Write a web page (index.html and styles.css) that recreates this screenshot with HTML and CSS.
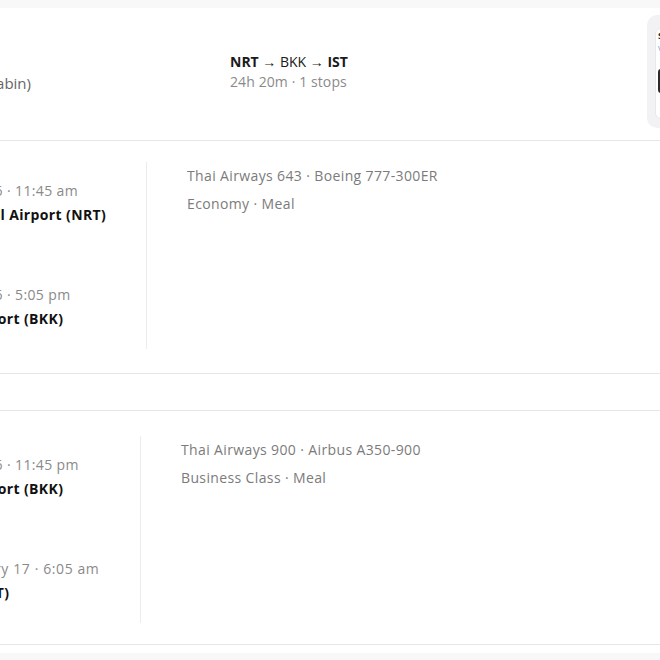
FILE: index.html
```html
<!DOCTYPE html>
<html lang="en">
<head>
<meta charset="utf-8">
<title>Itinerary</title>
<link rel="stylesheet" href="styles.css">
</head>
<body>
<div class="card">
  <div class="header">
    <div class="h-left">
      <div class="h-title">Tokyo to Istanbul</div>
      <div class="h-sub">2 adults · One way (Mixed cabin)</div>
    </div>
    <div class="h-mid">
      <div class="route"><b>NRT</b> → BKK → <b>IST</b></div>
      <div class="meta">24h 20m · 1 stops</div>
    </div>
    <div class="h-right">
      <div class="offer">
        <div class="offer-title">Select fare</div>
        <div class="offer-link">View details</div>
        <div class="offer-btn">Book</div>
      </div>
    </div>
  </div>

  <div class="leg leg-first">
    <div class="times">
      <div class="stop">
        <div class="when">Tuesday, February 16 · 11:45 am</div>
        <div class="where">Narita International Airport (NRT)</div>
      </div>
      <div class="stop">
        <div class="when">Tuesday, February 16 · 5:05 pm</div>
        <div class="where">Suvarnabhumi Airport (BKK)</div>
      </div>
    </div>
    <div class="details">
      <div class="line">Thai Airways 643 · Boeing 777-300ER</div>
      <div class="line">Economy · Meal</div>
    </div>
  </div>

  <div class="layover">6h 40m layover · Bangkok</div>

  <div class="leg leg-second">
    <div class="times">
      <div class="stop">
        <div class="when">Tuesday, February 16 · 11:45 pm</div>
        <div class="where">Suvarnabhumi Airport (BKK)</div>
      </div>
      <div class="stop">
        <div class="when when-long">Wednesday, February 17 · 6:05 am</div>
        <div class="where">Istanbul Airport (IST)</div>
      </div>
    </div>
    <div class="details">
      <div class="line">Thai Airways 900 · Airbus A350-900</div>
      <div class="line">Business Class · Meal</div>
    </div>
  </div>
</div>
</body>
</html>
```

FILE: styles.css
```css
html, body {
  margin: 0;
  padding: 0;
}
body {
  background: #f8f8f8;
  font-family: "Open Sans", "Liberation Sans", sans-serif;
  font-size: 14px;
  color: #1a1a1a;
  overflow: hidden;
  padding-top: 8px;
}
.card {
  background: #ffffff;
  width: 1200px;
  margin-left: -200px;
  padding-bottom: 8px;
}
.header {
  display: grid;
  grid-template-columns: 430px 417px 1fr;
  align-items: center;
  height: 132px;
  border-bottom: 1px solid #e6e6e6;
}
.h-left {
  padding-right: 199px;
  margin-top: -4px;
}
.h-title {
  font-weight: 600;
  font-size: 15px;
  line-height: 22px;
  text-align: left;
  padding-left: 20px;
}
.h-sub {
  font-size: 15px;
  line-height: 22px;
  color: #666;
  text-align: right;
}
.h-mid {
  margin-top: -5px;
  line-height: 20px;
}
.route {
  color: #1a1a1a;
}
.route b {
  font-weight: 700;
}
.meta {
  color: #8a8a8a;
  letter-spacing: 0.1px;
}
.h-right {
  align-self: start;
  margin-top: 7px;
  height: 113px;
  box-sizing: border-box;
  background: #f2f2f4;
  border-radius: 10px;
  padding: 13px 8px 9px;
}
.offer {
  height: 100%;
  box-sizing: border-box;
  background: #ffffff;
  border: 1px solid #e8e8ea;
  border-radius: 6px;
  padding: 1px 2px;
}
.offer-title {
  font-size: 9px;
  font-weight: 700;
  line-height: 12px;
  color: #222;
}
.offer-link {
  font-size: 7px;
  line-height: 10px;
  color: #4a8fd8;
  margin-top: 2px;
}
.offer-btn {
  margin-top: 15px;
  height: 24px;
  background: #2a2a2a;
  border-radius: 3px;
  color: #fff;
  font-size: 10px;
  line-height: 24px;
  padding-left: 8px;
}
.leg {
  display: flex;
  align-items: flex-start;
  border-bottom: 1px solid #e6e6e6;
}
.leg-first {
  padding: 21px 0 24px;
}
.leg-second {
  padding: 25px 0 21px;
}
.times {
  flex: none;
  height: 187px;
  box-sizing: border-box;
  display: flex;
  flex-direction: column;
  justify-content: space-between;
  padding: 17px 41px 18px 56px;
  border-right: 1px solid #ececec;
  line-height: 24px;
  letter-spacing: 0.37px;
}
.leg-first .times {
  width: 347px;
}
.leg-second .times {
  width: 341px;
}
.when {
  color: #8a8a8a;
  white-space: nowrap;
}
.when-long {
  letter-spacing: 0.6px;
}
.where {
  font-weight: 700;
  color: #111;
  white-space: nowrap;
}
.details {
  padding: 2px 0 0 40px;
  color: #7b7b7b;
  letter-spacing: 0.37px;
}
.line {
  line-height: 24px;
  margin-bottom: 4px;
}
.layover {
  height: 36px;
  border-bottom: 1px solid #e6e6e6;
  line-height: 36px;
  padding-left: 20px;
  color: #888;
  font-size: 13px;
}
```
